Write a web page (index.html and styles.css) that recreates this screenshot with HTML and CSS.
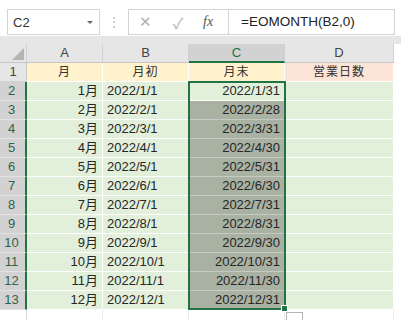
FILE: index.html
```html
<!DOCTYPE html>
<html lang="ja">
<head>
    <meta charset="UTF-8">
    <meta name="viewport" content="width=device-width, initial-scale=1.0">
    <title>EOMONTH</title>
    <link rel="stylesheet" href="styles.css">
</head>
<body>

<div class="toolbar">
    <div class="namebox">
        <span>C2</span>
        <span class="caret"></span>
    </div>
    <div class="grip">⋮</div>
    <div class="fxbox">
        <span class="icon">✕</span>
        <span class="icon">✓</span>
        <span class="fx">fx</span>
    </div>
    <div class="formula">=EOMONTH(B2,0)</div>
</div>

<div class="band"></div>

<div class="sheet">
    <div class="corner"><span class="tri"></span></div>
    <div class="colhead">A</div>
    <div class="colhead">B</div>
    <div class="colhead active">C</div>
    <div class="colhead">D</div>
    <div class="blank"></div>

    <div class="rowhead">1</div>
    <div class="cell title">月</div>
    <div class="cell title">月初</div>
    <div class="cell title">月末</div>
    <div class="cell title pink">営業日数</div>
    <div class="blank"></div>

    <div class="rowhead sel">2</div>
    <div class="cell num">1月</div>
    <div class="cell">2022/1/1</div>
    <div class="cell num">2022/1/31</div>
    <div class="cell"></div>
    <div class="blank"></div>

    <div class="rowhead sel">3</div>
    <div class="cell num">2月</div>
    <div class="cell">2022/2/1</div>
    <div class="cell num picked">2022/2/28</div>
    <div class="cell"></div>
    <div class="blank"></div>

    <div class="rowhead sel">4</div>
    <div class="cell num">3月</div>
    <div class="cell">2022/3/1</div>
    <div class="cell num picked">2022/3/31</div>
    <div class="cell"></div>
    <div class="blank"></div>

    <div class="rowhead sel">5</div>
    <div class="cell num">4月</div>
    <div class="cell">2022/4/1</div>
    <div class="cell num picked">2022/4/30</div>
    <div class="cell"></div>
    <div class="blank"></div>

    <div class="rowhead sel">6</div>
    <div class="cell num">5月</div>
    <div class="cell">2022/5/1</div>
    <div class="cell num picked">2022/5/31</div>
    <div class="cell"></div>
    <div class="blank"></div>

    <div class="rowhead sel">7</div>
    <div class="cell num">6月</div>
    <div class="cell">2022/6/1</div>
    <div class="cell num picked">2022/6/30</div>
    <div class="cell"></div>
    <div class="blank"></div>

    <div class="rowhead sel">8</div>
    <div class="cell num">7月</div>
    <div class="cell">2022/7/1</div>
    <div class="cell num picked">2022/7/31</div>
    <div class="cell"></div>
    <div class="blank"></div>

    <div class="rowhead sel">9</div>
    <div class="cell num">8月</div>
    <div class="cell">2022/8/1</div>
    <div class="cell num picked">2022/8/31</div>
    <div class="cell"></div>
    <div class="blank"></div>

    <div class="rowhead sel">10</div>
    <div class="cell num">9月</div>
    <div class="cell">2022/9/1</div>
    <div class="cell num picked">2022/9/30</div>
    <div class="cell"></div>
    <div class="blank"></div>

    <div class="rowhead sel">11</div>
    <div class="cell num">10月</div>
    <div class="cell">2022/10/1</div>
    <div class="cell num picked">2022/10/31</div>
    <div class="cell"></div>
    <div class="blank"></div>

    <div class="rowhead sel">12</div>
    <div class="cell num">11月</div>
    <div class="cell">2022/11/1</div>
    <div class="cell num picked">2022/11/30</div>
    <div class="cell"></div>
    <div class="blank"></div>

    <div class="rowhead sel">13</div>
    <div class="cell num">12月</div>
    <div class="cell">2022/12/1</div>
    <div class="cell num picked">2022/12/31</div>
    <div class="cell"></div>
    <div class="blank"></div>

    <div class="rowhead empty"></div>
    <div class="cell empty"></div>
    <div class="cell empty"></div>
    <div class="cell empty"></div>
    <div class="cell empty"></div>
    <div class="blank"></div>

    <div class="selection"><span class="handle"></span></div>
    <div class="quick"></div>
</div>

</body>
</html>
```

FILE: styles.css
```css
body {
    margin: 0;
    background-color: #ffffff;
    font-family: "Liberation Sans", "Noto Sans CJK JP", sans-serif;
    font-size: 13px;
    color: #262626;
    overflow: hidden;
}

/* formula bar */
.toolbar {
    height: 36px;
    box-sizing: border-box;
    padding: 9px 6px 0 7px;
    display: flex;
    align-items: flex-start;
    background-color: #ffffff;
}
.namebox {
    width: 93px;
    height: 26px;
    box-sizing: border-box;
    border: 1px solid #d4d4d4;
    background-color: #fff;
    display: flex;
    align-items: center;
    justify-content: space-between;
    padding: 0 6px 0 5px;
    font-size: 13px;
    color: #333;
}
.caret {
    width: 0;
    height: 0;
    border-left: 3px solid transparent;
    border-right: 3px solid transparent;
    border-top: 3px solid #666;
}
.grip {
    width: 28px;
    text-align: center;
    color: #b8b8b8;
    font-size: 12px;
    line-height: 26px;
}
.fxbox {
    width: 100px;
    height: 26px;
    box-sizing: border-box;
    border: 1px solid #d4d4d4;
    border-right: none;
    background-color: #fff;
    display: flex;
    align-items: center;
    padding-left: 10px;
}
.icon {
    width: 34px;
    color: #b0b0b0;
    font-size: 15px;
}
.fx {
    font-family: "Liberation Serif", serif;
    font-style: italic;
    color: #555;
    font-size: 14px;
    margin-left: -4px;
}
.formula {
    flex: 1;
    height: 26px;
    box-sizing: border-box;
    border: 1px solid #d4d4d4;
    background-color: #fff;
    padding-left: 12px;
    line-height: 24px;
    font-size: 13.5px;
    color: #222;
}

.band {
    height: 8px;
    background-color: #e6e6e6;
}

/* grid */
.sheet {
    position: relative;
    display: grid;
    grid-template-columns: 27px 76px 86px 96px 109px 1fr;
    grid-auto-rows: 19px;
}
.sheet > div {
    box-sizing: border-box;
}
.corner {
    background-color: #e6e6e6;
    border-right: 1px solid #d0d0d0;
    border-bottom: 1px solid #c6c6c6;
    position: relative;
}
.tri {
    position: absolute;
    right: 2px;
    bottom: 2px;
    width: 0;
    height: 0;
    border-left: 12px solid transparent;
    border-bottom: 12px solid #b4b4b4;
}
.colhead {
    background-color: #e6e6e6;
    border-right: 1px solid #d0d0d0;
    border-bottom: 1px solid #c6c6c6;
    text-align: center;
    line-height: 18px;
    color: #444;
}
.colhead.active {
    background-color: #d2d2d2;
    color: #217346;
    border-bottom: 2px solid #217346;
    line-height: 17px;
}
.blank {
    background-color: #fff;
}
.rowhead {
    background-color: #e6e6e6;
    border-right: 1px solid #c6c6c6;
    border-bottom: 1px solid #d0d0d0;
    text-align: center;
    line-height: 18px;
    color: #444;
}
.rowhead.sel {
    background-color: #d2d2d2;
    border-right: 2px solid #217346;
    border-bottom: 1px solid #e2e2e2;
    color: #2f6447;
    padding-right: 2px;
}
.rowhead.empty {
    background-color: #fff;
    border-right: 1px solid #d8d8d8;
    border-bottom: none;
}
.cell {
    background-color: #e2efda;
    border-right: 1px solid #fff;
    border-bottom: 1px solid #fff;
    padding: 0 4px;
    line-height: 18px;
    white-space: nowrap;
    overflow: hidden;
}
.cell.num {
    text-align: right;
}
.cell.title {
    background-color: #fff2cc;
    text-align: center;
    font-size: 12px;
    letter-spacing: 1px;
    color: #333;
}
.cell.pink {
    background-color: #fce4d6;
}
.cell.picked {
    background-color: #a9b1a3;
    border-bottom-color: #c6cac2;
    color: #262626;
}
.cell.empty {
    background-color: #fff;
    border-right: 1px solid #ececec;
    border-bottom: none;
}

.selection {
    position: absolute;
    left: 188px;
    top: 37px;
    width: 98px;
    height: 229px;
    box-sizing: border-box;
    border: 2px solid #217346;
}
.handle {
    position: absolute;
    right: -4px;
    bottom: -4px;
    width: 5px;
    height: 5px;
    background-color: #217346;
    border: 1px solid #fff;
}
.quick {
    position: absolute;
    left: 286px;
    top: 268px;
    width: 17px;
    height: 14px;
    border: 1px solid #b4b4b4;
    background-color: #fff;
}
```
